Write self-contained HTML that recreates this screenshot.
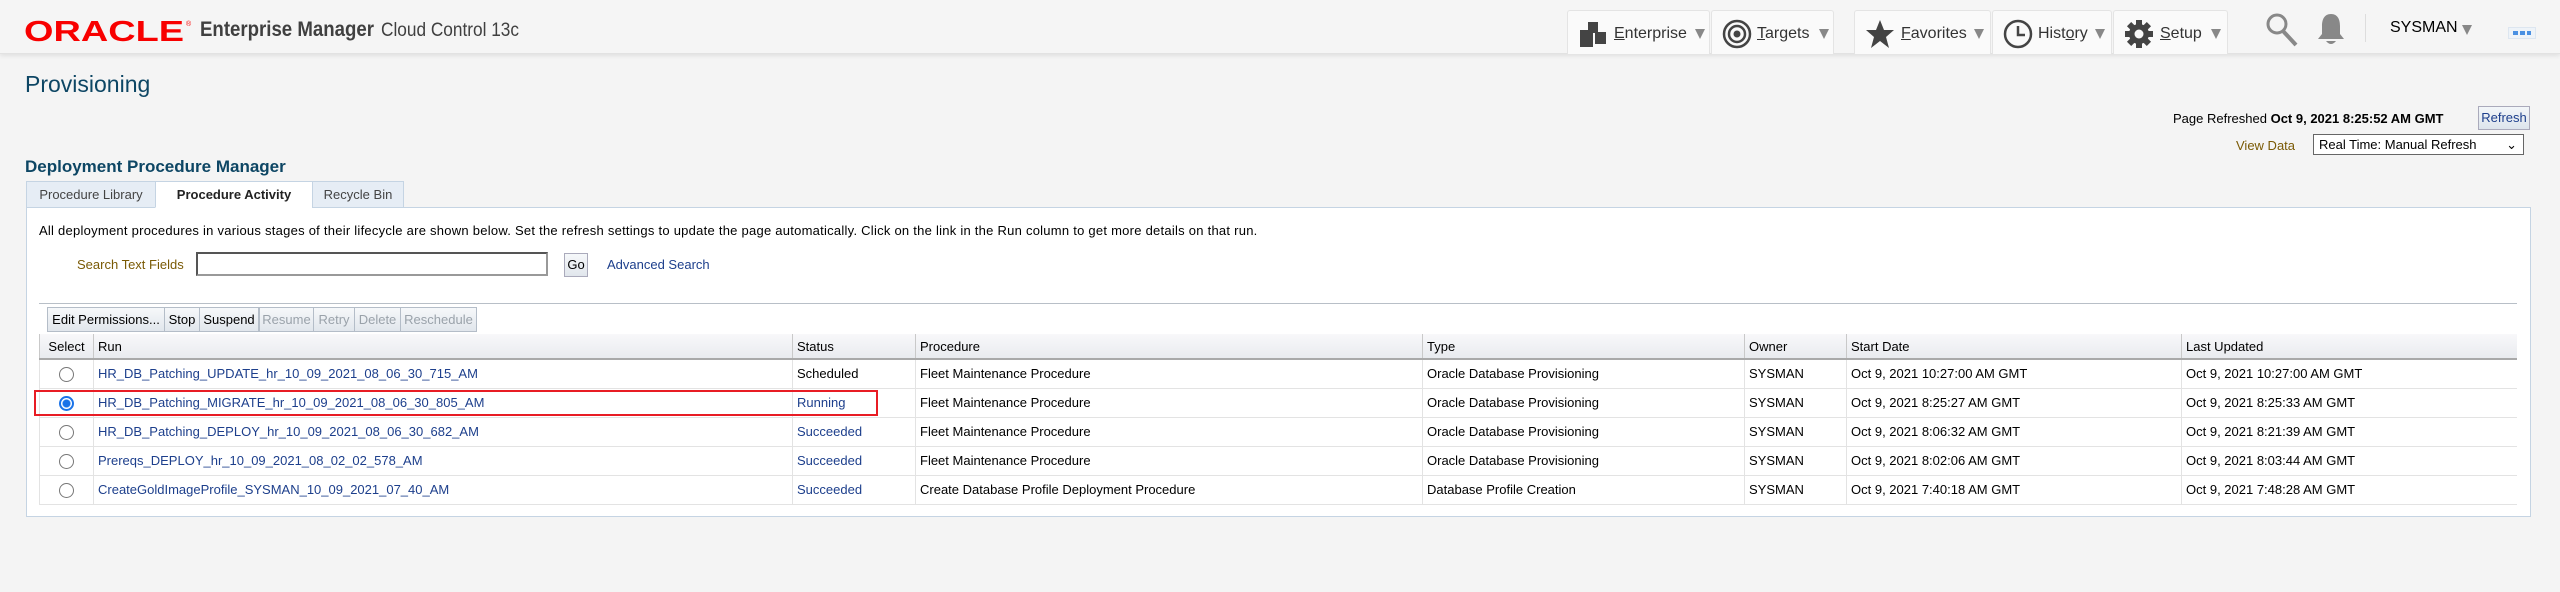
<!DOCTYPE html>
<html><head><meta charset="utf-8">
<style>
*{box-sizing:border-box;margin:0;padding:0}
body{width:2560px;height:592px;background:#f4f4f4;font-family:"Liberation Sans",Arial,sans-serif;font-size:13px;color:#000;position:relative;overflow:hidden}
.a{position:absolute;white-space:nowrap}
#hdr{position:absolute;left:0;top:0;width:2560px;height:54px;background:#f5f5f5;border-bottom:1px solid #e2e2e2;box-shadow:0 2px 4px rgba(0,0,0,.08)}
.nb{position:absolute;top:10px;height:44px;background:#fafafa;border:1px solid #e4e4e4;border-bottom:none;border-radius:3px 3px 0 0;font-size:16px;color:#333}
.nb span{position:absolute;top:14px}
.tri{display:inline-block;width:0;height:0;border-left:5px solid transparent;border-right:5px solid transparent;border-top:10px solid #888;position:absolute;top:18px}
.link{color:#1d3f8c}
.tab{position:absolute;top:181px;height:27px;border:1px solid #c5d4e3;background:#e6edf5;color:#444;font-size:13px;text-align:center;line-height:26px}
.btn{position:absolute;top:307px;height:25px;border:1px solid #b4bdc8;background:linear-gradient(#f6f8fa,#e1e6ec);font-size:13px;line-height:23px;text-align:center;color:#000}
.dis{color:#9aa2aa}
table{position:absolute;left:39px;top:334px;width:2478px;border-collapse:collapse;background:#fff}
th{height:25px;background:linear-gradient(#f8f8fa,#e9ebef);font-weight:normal;text-align:left;padding-left:4px;border-left:1px solid #c9c9c9;border-bottom:2px solid #a9a9a9;font-size:13px}
td{height:29px;padding-left:4px;border-left:1px solid #e3e3e3;border-bottom:1px solid #e3e3e3;font-size:13px}
td.c{text-align:center;padding-left:0}
.r{display:inline-block;width:15px;height:15px;border:1.5px solid #777;border-radius:50%;vertical-align:middle;background:#fff}
.r.on{border:2px solid #1a73e8;background:radial-gradient(circle,#1a73e8 3.5px,#fff 4.5px)}
</style></head><body>
<div id="hdr">
<svg class="a" style="left:24px;top:18px" width="170" height="26"><text x="0" y="23" font-family="Liberation Sans" font-weight="bold" font-size="29" fill="#f80000" textLength="160" lengthAdjust="spacingAndGlyphs">ORACLE</text><text x="162" y="8" font-size="7" fill="#f80000">®</text></svg>
<svg class="a" style="left:200px;top:14px" width="330" height="30"><text x="0" y="22" font-family="Liberation Sans" font-weight="bold" font-size="21" fill="#404040" textLength="174" lengthAdjust="spacingAndGlyphs">Enterprise Manager</text><text x="181" y="22" font-family="Liberation Sans" font-size="19" fill="#404040" textLength="138" lengthAdjust="spacingAndGlyphs">Cloud Control 13c</text></svg>

<div class="nb" style="left:1567px;width:143px">
<svg class="a" style="left:12px;top:11px" width="28" height="26"><rect x="8" y="0" width="10" height="11" fill="#444"/><rect x="0" y="8" width="13" height="17" fill="#444"/><rect x="15" y="10" width="11" height="12" fill="#444"/></svg>
<span style="left:46px"><u>E</u>nterprise</span><i class="tri" style="left:127px"></i></div>
<div class="nb" style="left:1711px;width:123px">
<svg class="a" style="left:10px;top:8px" width="30" height="30"><circle cx="15" cy="15" r="13" fill="none" stroke="#444" stroke-width="2.5"/><circle cx="15" cy="15" r="8" fill="none" stroke="#444" stroke-width="2.5"/><circle cx="15" cy="15" r="3.5" fill="#444"/></svg>
<span style="left:45px"><u>T</u>argets</span><i class="tri" style="left:107px"></i></div>
<div class="nb" style="left:1854px;width:137px">
<svg class="a" style="left:10px;top:8px" width="30" height="30"><path d="M15 1 L19 11 L29 11 L21 18 L24 29 L15 22 L6 29 L9 18 L1 11 L11 11 Z" fill="#444"/></svg>
<span style="left:46px"><u>F</u>avorites</span><i class="tri" style="left:119px"></i></div>
<div class="nb" style="left:1992px;width:120px">
<svg class="a" style="left:10px;top:8px" width="30" height="30"><circle cx="15" cy="15" r="13" fill="none" stroke="#444" stroke-width="2.5"/><path d="M15 7 V16 H22" fill="none" stroke="#444" stroke-width="2.5"/></svg>
<span style="left:45px">Hist<u>o</u>ry</span><i class="tri" style="left:102px"></i></div>
<div class="nb" style="left:2113px;width:115px">
<svg class="a" style="left:10px;top:8px" width="30" height="30"><g fill="#444" transform="translate(15 15)"><circle r="10"/><rect x="-3" y="-14" width="6" height="28"/><rect x="-14" y="-3" width="28" height="6"/><rect x="-3" y="-14" width="6" height="28" transform="rotate(45)"/><rect x="-3" y="-14" width="6" height="28" transform="rotate(-45)"/></g><circle cx="15" cy="15" r="4.5" fill="#fafafa"/></svg>
<span style="left:46px"><u>S</u>etup</span><i class="tri" style="left:97px"></i></div>

<svg class="a" style="left:2265px;top:12px" width="34" height="36"><circle cx="12" cy="12" r="9" fill="none" stroke="#888" stroke-width="3"/><path d="M18 19 L31 33" stroke="#888" stroke-width="4"/></svg>
<svg class="a" style="left:2315px;top:12px" width="32" height="36"><path d="M16 2 C9 2 7 8 7 14 V22 L3 27 H29 L25 22 V14 C25 8 23 2 16 2 Z" fill="#888"/><path d="M11 29 Q16 35 21 29 Z" fill="#888"/></svg>
<div class="a" style="left:2365px;top:14px;width:1px;height:28px;background:#ddd"></div>
<div class="a" style="left:2390px;top:19px;font-size:16px;color:#000">SYSMAN</div>
<i class="tri" style="position:absolute;left:2462px;top:25px"></i>
<div class="a" style="left:2508px;top:27px;width:28px;height:12px;border:1px solid #dde6f0;background:#eef3f8"><div style="position:absolute;left:4px;top:3px;width:18px;height:4px;background:repeating-linear-gradient(90deg,#4a90e2 0 5px,transparent 5px 7px)"></div></div>
</div>

<div class="a" style="left:25px;top:71px;font-size:23px;color:#0d4664">Provisioning</div>
<div class="a" style="left:2173px;top:111px;font-size:13px">Page Refreshed <b>Oct 9, 2021 8:25:52 AM GMT</b></div>
<div class="a" style="left:2478px;top:106px;width:52px;height:24px;border:1px solid #aab;background:linear-gradient(#f3f6f9,#dde4ec);color:#1d3f8c;font-size:13px;line-height:22px;text-align:center">Refresh</div>
<div class="a" style="left:2236px;top:138px;color:#7a5a05">View Data</div>
<div class="a" style="left:2313px;top:134px;width:211px;height:21px;border:1px solid #666;background:#fff;font-size:13px;line-height:19px;padding-left:5px">Real Time: Manual Refresh<span style="position:absolute;right:6px;top:0">&#8964;</span></div>

<div class="a" style="left:25px;top:157px;font-size:17px;font-weight:bold;color:#0d4664">Deployment Procedure Manager</div>
<div class="a" style="left:26px;top:207px;width:2505px;height:310px;background:#fff;border:1px solid #c5d4e3"></div>
<div class="tab" style="left:26px;width:130px">Procedure Library</div>
<div class="tab" style="left:155px;width:158px;background:#fff;border-bottom-color:#fff;color:#222;font-weight:bold">Procedure Activity</div>
<div class="tab" style="left:312px;width:92px">Recycle Bin</div>

<div class="a" style="left:39px;top:223px;letter-spacing:0.25px">All deployment procedures in various stages of their lifecycle are shown below. Set the refresh settings to update the page automatically. Click on the link in the Run column to get more details on that run.</div>
<div class="a" style="left:77px;top:257px;color:#7a5a05">Search Text Fields</div>
<div class="a" style="left:196px;top:252px;width:352px;height:24px;border:2px solid #555;border-right-color:#999;border-bottom-color:#999;background:#fff"></div>
<div class="a" style="left:564px;top:253px;width:24px;height:24px;border:1px solid #aab;background:linear-gradient(#f6f8fa,#e1e6ec);text-align:center;line-height:22px">Go</div>
<div class="a link" style="left:607px;top:257px">Advanced Search</div>
<div class="a" style="left:39px;top:303px;width:2478px;height:1px;background:#b8bfc7"></div>

<div class="btn" style="left:47px;width:118px">Edit Permissions...</div>
<div class="btn" style="left:164px;width:36px">Stop</div>
<div class="btn" style="left:199px;width:60px">Suspend</div>
<div class="btn dis" style="left:259px;width:55px">Resume</div>
<div class="btn dis" style="left:313px;width:42px">Retry</div>
<div class="btn dis" style="left:354px;width:47px">Delete</div>
<div class="btn dis" style="left:400px;width:77px">Reschedule</div>

<table>
<tr><th style="width:54px;text-align:center;padding:0">Select</th><th style="width:699px">Run</th><th style="width:123px">Status</th><th style="width:507px">Procedure</th><th style="width:322px">Type</th><th style="width:102px">Owner</th><th style="width:335px">Start Date</th><th>Last Updated</th></tr>
<tr><td class="c"><i class="r"></i></td><td class="link">HR_DB_Patching_UPDATE_hr_10_09_2021_08_06_30_715_AM</td><td>Scheduled</td><td>Fleet Maintenance Procedure</td><td>Oracle Database Provisioning</td><td>SYSMAN</td><td>Oct 9, 2021 10:27:00 AM GMT</td><td>Oct 9, 2021 10:27:00 AM GMT</td></tr>
<tr><td class="c"><i class="r on"></i></td><td class="link">HR_DB_Patching_MIGRATE_hr_10_09_2021_08_06_30_805_AM</td><td class="link">Running</td><td>Fleet Maintenance Procedure</td><td>Oracle Database Provisioning</td><td>SYSMAN</td><td>Oct 9, 2021 8:25:27 AM GMT</td><td>Oct 9, 2021 8:25:33 AM GMT</td></tr>
<tr><td class="c"><i class="r"></i></td><td class="link">HR_DB_Patching_DEPLOY_hr_10_09_2021_08_06_30_682_AM</td><td class="link">Succeeded</td><td>Fleet Maintenance Procedure</td><td>Oracle Database Provisioning</td><td>SYSMAN</td><td>Oct 9, 2021 8:06:32 AM GMT</td><td>Oct 9, 2021 8:21:39 AM GMT</td></tr>
<tr><td class="c"><i class="r"></i></td><td class="link">Prereqs_DEPLOY_hr_10_09_2021_08_02_02_578_AM</td><td class="link">Succeeded</td><td>Fleet Maintenance Procedure</td><td>Oracle Database Provisioning</td><td>SYSMAN</td><td>Oct 9, 2021 8:02:06 AM GMT</td><td>Oct 9, 2021 8:03:44 AM GMT</td></tr>
<tr><td class="c"><i class="r"></i></td><td class="link">CreateGoldImageProfile_SYSMAN_10_09_2021_07_40_AM</td><td class="link">Succeeded</td><td>Create Database Profile Deployment Procedure</td><td>Database Profile Creation</td><td>SYSMAN</td><td>Oct 9, 2021 7:40:18 AM GMT</td><td>Oct 9, 2021 7:48:28 AM GMT</td></tr>
</table>
<div class="a" style="left:34px;top:390px;width:844px;height:26px;border:2.5px solid #e81c24"></div>
</body></html>
